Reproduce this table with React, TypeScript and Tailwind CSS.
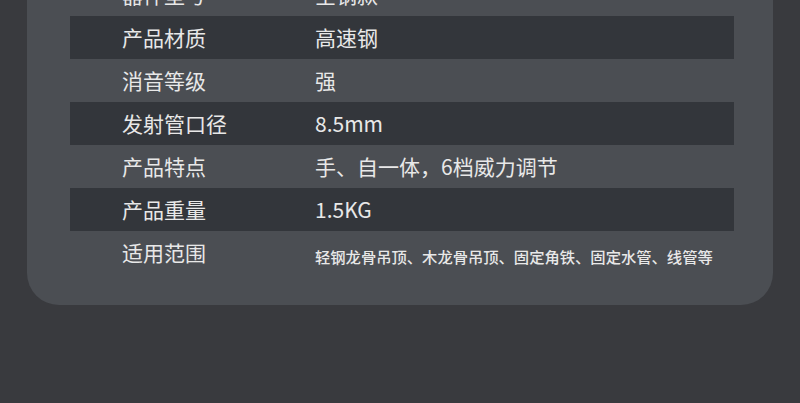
import React from "react";

const rows: { label: string; value: string; small?: boolean }[] = [
  { label: "器件型号", value: "全钢款" },
  { label: "产品材质", value: "高速钢" },
  { label: "消音等级", value: "强" },
  { label: "发射管口径", value: "8.5mm" },
  { label: "产品特点", value: "手、自一体，6档威力调节" },
  { label: "产品重量", value: "1.5KG" },
  { label: "适用范围", value: "轻钢龙骨吊顶、木龙骨吊顶、固定角铁、固定水管、线管等", small: true },
];

export default function App() {
  return (
    <div
      className="w-[800px] h-[403px] overflow-hidden bg-[#393a3e]"
      style={{ fontFamily: '"Noto Sans CJK SC", "Noto Sans", sans-serif' }}
    >
      <div className="ml-[27px] -mt-[27px] w-[746px] rounded-b-[32px] bg-[#4b4e53] pl-[43px] pr-[39px] pb-[31px]">
        {rows.map((r, i) => (
          <div
            key={r.label}
            className={`flex items-center h-[43px] ${i % 2 === 1 ? "bg-[#33363b]" : ""}`}
          >
            <div className="w-[245px] pl-[52px] text-[21px] text-[#e8e8e8] leading-none">{r.label}</div>
            <div className={`${r.small ? "text-[15.3px] font-medium pt-[9px]" : "text-[21px]"} text-[#e8e8e8] leading-none`}>
              {r.value}
            </div>
          </div>
        ))}
      </div>
    </div>
  );
}
